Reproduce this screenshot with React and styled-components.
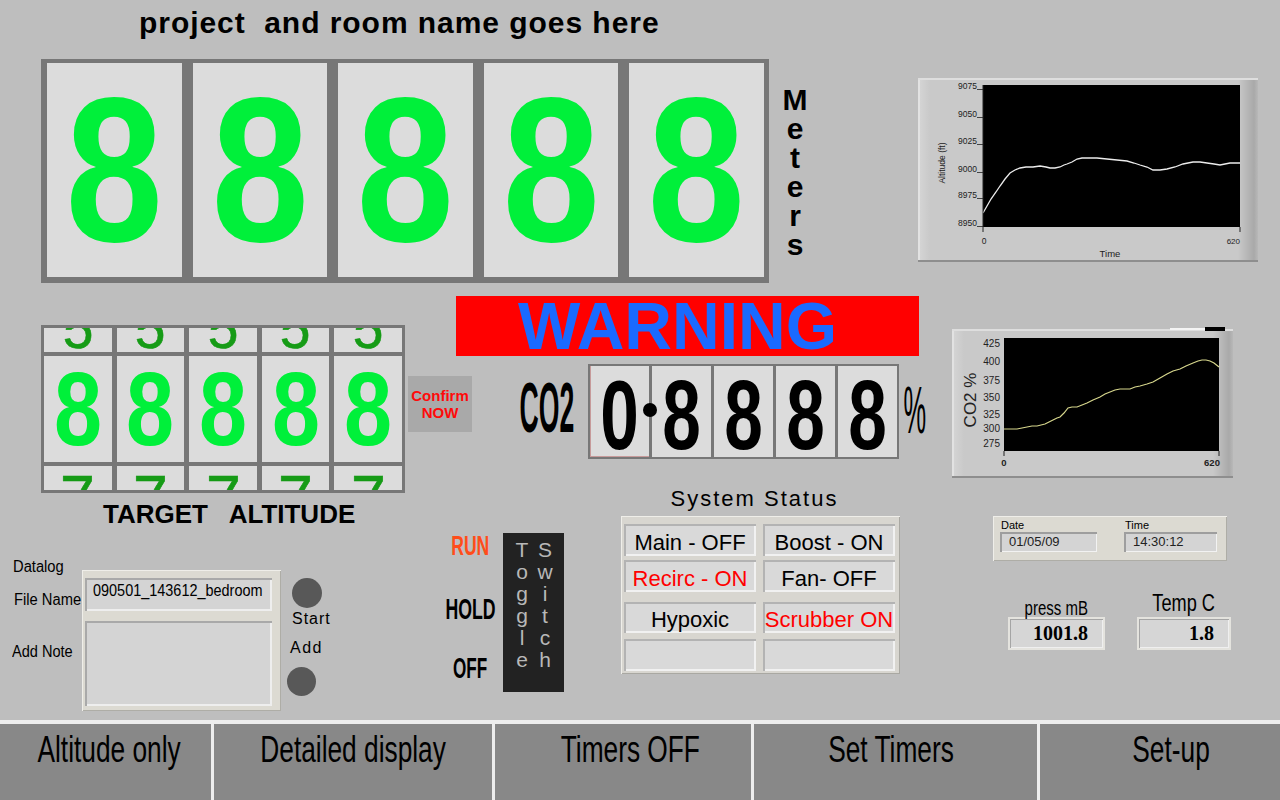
import React from 'react';
import styled, { createGlobalStyle } from 'styled-components';

const GlobalStyle = createGlobalStyle`
  html, body {
    margin: 0;
    padding: 0;
    background: #bebebe;
  }
  body {
    font-family: 'Liberation Sans', Arial, sans-serif;
    color: #000;
  }
`;

const Screen = styled.div`
  width: 1280px;
  height: 800px;
  overflow: hidden;
  background: #bebebe;
  display: flex;
  flex-direction: column;
`;

const Main = styled.div`
  height: 720px;
  display: flex;
  flex-direction: column;
`;

const Row = styled.div`
  display: flex;
  align-items: flex-start;
  height: ${(p) => (p.$h ? `${p.$h}px` : 'auto')};
  margin-top: ${(p) => p.$mt || 0}px;
  margin-left: ${(p) => p.$ml || 0}px;
`;

const Stack = styled.div`
  display: flex;
  flex-direction: column;
  margin-left: ${(p) => p.$ml || 0}px;
  margin-top: ${(p) => p.$mt || 0}px;
  align-items: ${(p) => p.$align || 'stretch'};
  width: ${(p) => (p.$w ? `${p.$w}px` : 'auto')};
`;

const Narrow = styled.span`
  display: inline-block;
  white-space: pre;
  transform: scaleX(${(p) => p.$sx || 1});
  transform-origin: ${(p) => p.$origin || 'center'} center;
`;

/* ---------- top: title + big altitude digits ---------- */

const Title = styled.h1`
  margin: 0;
  height: 59px;
  box-sizing: border-box;
  padding: 6px 0 0 98px;
  font-size: 30px;
  line-height: 34px;
  font-weight: bold;
  letter-spacing: 0.95px;
  white-space: pre;
`;

const BigFrame = styled.div`
  width: 728px;
  height: 224px;
  box-sizing: border-box;
  padding: 4px 5px 6px 6px;
  background: #777;
  display: flex;
  gap: 11px;
`;

const BigCell = styled.div`
  flex: 1;
  background: #dcdcdc;
  display: flex;
  align-items: center;
  justify-content: center;
`;

const BigDigit = styled.span`
  font-size: 206px;
  line-height: 1;
  font-weight: bold;
  color: #00f03a;
  transform: scaleX(0.85);
`;

const Meters = styled.div`
  width: 24px;
  margin: 85px 0 0 14px;
  display: flex;
  flex-direction: column;
  align-items: center;
  font-size: 30px;
  line-height: 29px;
  font-weight: bold;
`;

/* ---------- charts ---------- */

const ChartPanel = styled.div`
  width: ${(p) => p.$w}px;
  height: ${(p) => p.$h}px;
  margin-left: ${(p) => p.$ml}px;
  margin-top: ${(p) => p.$mt}px;
  background: linear-gradient(
    to right,
    #d6d6d6 0,
    #c9c9c9 12px,
    #c9c9c9 calc(100% - 20px),
    #a9a9a9 calc(100% - 4px),
    #b8b8b8 100%
  );
  box-shadow: inset 0 2px 0 #dedede, inset 0 -2px 0 #8e8e8e, inset 2px 0 0 #e2e2e2;

  svg {
    display: block;
    overflow: visible;
  }
  text {
    font-family: 'Liberation Sans', Arial, sans-serif;
    fill: #222;
  }
`;

const altPts =
  '65,135 69,128 73,121 78,114 82,108 87,101 92,95 97,92 102,90 108,89 115,89 122,88 128,89 132,90 137,90 142,89 146,87 149,86 154,84 159,81 164,80 169,80 179,80 189,81 199,82 209,83 216,85 222,87 229,89 235,92 242,92 249,91 257,89 265,86 270,85 275,84 282,84 289,85 296,86 302,87 307,86 312,85 322,85';

const AltitudeChart = () => {
  const ticks = [
    ['9075', 8],
    ['9050', 36],
    ['9025', 63],
    ['9000', 91],
    ['8975', 117],
    ['8950', 145],
  ];
  return (
    <ChartPanel $w={340} $h={184} $ml={111} $mt={78}>
      <svg width="340" height="184" viewBox="0 0 340 184">
        <rect x="65" y="7" width="257" height="142" fill="#000" />
        <polyline points={altPts} fill="none" stroke="#ececec" strokeWidth="1.3" />
        <line x1="65" y1="7" x2="65" y2="154" stroke="#222" strokeWidth="1" />
        <line x1="322" y1="149" x2="322" y2="154" stroke="#222" strokeWidth="1" />
        {ticks.map(([label, y]) => (
          <g key={label}>
            <text x="59" y={y + 3} fontSize="8.5" textAnchor="end">
              {label}
            </text>
            <line x1="59" y1={y + 3.5} x2="65" y2={y + 3.5} stroke="#222" strokeWidth="0.8" />
          </g>
        ))}
        <text x="27" y="85" fontSize="8.5" textAnchor="middle" transform="rotate(-90 27 85)">
          Altitude (ft)
        </text>
        <text x="66" y="166" fontSize="8.5" textAnchor="middle">
          0
        </text>
        <text x="322" y="166" fontSize="8" textAnchor="end">
          620
        </text>
        <text x="192" y="179" fontSize="9.5" textAnchor="middle">
          Time
        </text>
      </svg>
    </ChartPanel>
  );
};

const co2Pts =
  '52,100 58,100 65,100 70,99 75,98 80,97 85,97 89,96 93,95 97,93 101,91 105,89 108,88 112,84 116,79 120,78 125,78 130,76 135,74 141,71 148,68 153,65 158,63 163,61 168,60 173,60 178,60 183,58 188,57 195,55 201,53 208,49 215,45 221,42 228,40 234,37 241,34 246,32 250,31 254,31 258,32 262,34 267,38';

const Co2Chart = () => {
  const ticks = [
    ['425', 14],
    ['400', 32],
    ['375', 51],
    ['350', 68],
    ['325', 85],
    ['300', 99],
    ['275', 114],
  ];
  return (
    <ChartPanel $w={281} $h={149} $ml={26} $mt={39}>
      <svg width="281" height="149" viewBox="0 0 281 149">
        <line x1="218" y1="0" x2="253" y2="0" stroke="#f4f4f4" strokeWidth="2" />
        <rect x="253" y="-2" width="20" height="4" fill="#000" />
        <rect x="52" y="9" width="215" height="113" fill="#000" />
        <polyline points={co2Pts} fill="none" stroke="#d6d68c" strokeWidth="1.2" />
        <line x1="52" y1="122" x2="52" y2="127" stroke="#222" strokeWidth="1" />
        <line x1="267" y1="122" x2="267" y2="127" stroke="#222" strokeWidth="1" />
        {ticks.map(([label, y]) => (
          <text key={label} x="48" y={y + 3.5} fontSize="10" textAnchor="end">
            {label}
          </text>
        ))}
        <text x="24" y="71" fontSize="17" textAnchor="middle" transform="rotate(-90 24 71)">
          CO2  %
        </text>
        <text x="52" y="137" fontSize="9.5" fontWeight="bold" textAnchor="middle">
          0
        </text>
        <text x="260" y="137" fontSize="9.5" fontWeight="bold" textAnchor="middle">
          620
        </text>
      </svg>
    </ChartPanel>
  );
};

/* ---------- target altitude spinner ---------- */

const SpinFrame = styled.div`
  width: 364px;
  height: 168px;
  box-sizing: border-box;
  padding: 3px;
  background: #777;
  display: grid;
  grid-template-columns: repeat(5, 1fr);
  grid-template-rows: 24px 106px 24px;
  gap: 4px 5px;
`;

const SpinCell = styled.div`
  background: #dcdcdc;
  overflow: hidden;
  display: flex;
  justify-content: center;
  align-items: ${(p) =>
    p.$pos === 'top' ? 'flex-end' : p.$pos === 'bottom' ? 'flex-start' : 'center'};
`;

const spinSize = { top: 58, mid: 104, bottom: 66 };

const SpinDigit = styled.span`
  line-height: 1;
  font-size: ${(p) => spinSize[p.$pos]}px;
  font-weight: ${(p) => (p.$pos === 'mid' ? 'bold' : 'normal')};
  color: ${(p) => (p.$pos === 'mid' ? '#00f03a' : '#169b16')};
  transform: scaleX(${(p) => (p.$pos === 'mid' ? 0.83 : 0.95)});
  margin-bottom: ${(p) => (p.$pos === 'top' ? -5 : 0)}px;
  -webkit-text-stroke: ${(p) => (p.$pos === 'mid' ? 0 : 0.6)}px #169b16;
`;

const TargetLabel = styled.div`
  margin: 6px 0 0 62px;
  font-size: 26px;
  line-height: 30px;
  font-weight: bold;
  white-space: pre;
`;

const ConfirmButton = styled.button`
  width: 64px;
  height: 56px;
  margin: 51px 0 0 3px;
  padding: 0;
  border: none;
  background: #a9a9a9;
  color: #ff0a0a;
  font-family: 'Liberation Sans', Arial, sans-serif;
  font-size: 15px;
  line-height: 17px;
  font-weight: bold;
`;

/* ---------- warning + CO2 readout ---------- */

const Warning = styled.div`
  width: 463px;
  height: 60px;
  box-sizing: border-box;
  padding-right: 20px;
  background: #ff0000;
  color: #1a6aff;
  font-size: 66px;
  line-height: 60px;
  font-weight: bold;
  text-align: center;
`;

const Co2Row = styled.div`
  display: flex;
  align-items: center;
  margin-top: 8px;
  padding-left: 64px;
`;

const Co2Label = styled.div`
  width: 53px;
  margin: 0 15px 8px 0;
  display: flex;
  justify-content: center;
  font-size: 70px;
  line-height: 70px;
  font-weight: bold;
`;

const PercentLabel = styled.div`
  width: 23px;
  margin: 0 0 4px 4px;
  display: flex;
  justify-content: center;
  font-size: 67px;
  line-height: 67px;
`;

const Co2Frame = styled.div`
  position: relative;
  width: 311px;
  height: 95px;
  box-sizing: border-box;
  padding: 2px;
  background: #777;
  display: grid;
  grid-template-columns: repeat(5, 1fr);
  grid-template-rows: 91px;
  gap: 3px;
`;

const Co2Cell = styled.div`
  background: #dcdcdc;
  display: flex;
  align-items: center;
  justify-content: center;
  padding-top: 6px;
  box-sizing: border-box;
  box-shadow: ${(p) => (p.$first ? 'inset 1px 0 0 #c79a9a, inset 0 -1px 0 #c79a9a' : 'none')};
`;

const Co2Digit = styled.span`
  font-size: 99px;
  line-height: 80px;
  font-weight: bold;
  transform: scaleX(0.7);
`;

const DecimalDot = styled.span`
  position: absolute;
  left: 55px;
  top: 39px;
  width: 14px;
  height: 14px;
  border-radius: 50%;
  background: #000;
`;

/* ---------- datalog ---------- */

const SmallLabel = styled.div`
  font-size: 16px;
  line-height: 18px;
  margin-top: ${(p) => p.$mt || 0}px;
  margin-left: ${(p) => p.$ml || 0}px;
  letter-spacing: ${(p) => p.$ls || 0}px;
  white-space: nowrap;
`;

const BeigePanel = styled.div`
  box-sizing: border-box;
  width: ${(p) => p.$w}px;
  height: ${(p) => p.$h}px;
  margin-top: ${(p) => p.$mt || 0}px;
  background: #dcdad2;
  box-shadow: inset 1px 1px 0 #efeee9, inset -1px -1px 0 #aeada6;
`;

const LogPanel = styled(BeigePanel)`
  padding: 8px 9px 5px 3px;
  display: flex;
  flex-direction: column;
  gap: 10px;
`;

const InsetField = styled.div`
  box-sizing: border-box;
  height: ${(p) => p.$h}px;
  width: ${(p) => (p.$w ? `${p.$w}px` : 'auto')};
  background: #d4d4d4;
  box-shadow: inset 2px 2px 0 #a9a9a9, inset -2px -2px 0 #eeeeee;
  white-space: nowrap;
`;

const FileNameField = styled(InsetField)`
  padding: 3px 0 0 8px;
  font-size: 17px;
  line-height: 20px;
`;

const RoundButton = styled.div`
  width: ${(p) => p.$d}px;
  height: ${(p) => p.$d}px;
  border-radius: 50%;
  background: #585858;
  margin-top: ${(p) => p.$mt || 0}px;
  margin-left: ${(p) => p.$ml || 0}px;
`;

/* ---------- toggle switch ---------- */

const ModeLabel = styled.div`
  font-size: ${(p) => p.$fs}px;
  line-height: ${(p) => p.$lh}px;
  font-weight: bold;
  color: ${(p) => p.$color || '#000'};
  margin-top: ${(p) => p.$mt}px;
`;

const ToggleBox = styled.div`
  width: 61px;
  height: 159px;
  box-sizing: border-box;
  margin: 49px 0 0 8px;
  padding: 6px 0 0 9px;
  background: #222;
  display: flex;
  gap: 3px;
`;

const ToggleColumn = styled.div`
  width: 20px;
  display: flex;
  flex-direction: column;
  align-items: center;
  font-size: 21px;
  line-height: 22px;
  color: #b8b8b8;
`;

/* ---------- system status ---------- */

const StatusTitle = styled.div`
  margin-top: 2px;
  padding-right: 12px;
  font-size: 22px;
  line-height: 26px;
  letter-spacing: 2px;
  text-align: center;
`;

const StatusPanel = styled.div`
  width: 279px;
  height: 158px;
  box-sizing: border-box;
  margin-top: 4px;
  padding: 8px 5px 3px 3px;
  background: #d8d6d0;
  box-shadow: inset 1px 1px 0 #efeee9, inset -1px -1px 0 #a9a8a2;
  display: flex;
  flex-direction: column;
  gap: 10px;
`;

const StatusHalf = styled.div`
  display: grid;
  grid-template-columns: 1fr 1fr;
  grid-template-rows: ${(p) => p.$rows};
  column-gap: 7px;
  row-gap: ${(p) => p.$gap}px;
`;

const StatusCell = styled.div`
  background: #d9d9d9;
  box-shadow: inset 2px 2px 0 #b3b3b3, inset -2px -2px 0 #f1f1f1;
  display: flex;
  align-items: center;
  justify-content: center;
  padding-top: 5px;
  box-sizing: border-box;
  font-size: 22px;
  line-height: 24px;
  white-space: nowrap;
  color: ${(p) => (p.$on ? '#ff0000' : '#000')};
`;

/* ---------- date, time, pressure, temperature ---------- */

const DateTimePanel = styled(BeigePanel)`
  padding: 3px 0 0 7px;
  display: flex;
  gap: 27px;
`;

const TinyLabel = styled.div`
  font-size: 11px;
  line-height: 12px;
  padding-left: 1px;
  margin-bottom: 1px;
`;

const ClockField = styled(InsetField)`
  padding-left: 9px;
  font-size: 13px;
  line-height: 20px;
  color: #222;
  box-shadow: inset 2px 2px 0 #9e9e9e, inset -1px -1px 0 #f2f2f2;
`;

const ReadingRow = styled.div`
  display: flex;
  align-items: flex-end;
  margin: 30px 0 0 15px;
  gap: 32px;
`;

const ReadingLabel = styled.div`
  display: flex;
  justify-content: center;
  font-size: ${(p) => p.$fs}px;
  line-height: 24px;
  margin-bottom: ${(p) => p.$mb}px;
`;

const ReadingField = styled(InsetField)`
  padding-right: 17px;
  text-align: right;
  font-family: 'Liberation Serif', 'Times New Roman', serif;
  font-weight: bold;
  font-size: 20px;
  line-height: 32px;
  background: #d6d6d6;
  box-shadow: inset 0 0 0 2px #e4e3de, inset 3px 3px 0 #a5a5a5, inset -3px -3px 0 #efefef;
`;

/* ---------- bottom navigation ---------- */

const NavBar = styled.nav`
  height: 80px;
  box-sizing: border-box;
  border-top: 4px solid #ededed;
  background: #ededed;
  display: grid;
  grid-template-columns: 211px 278px 256px 283px 1fr;
  column-gap: 3px;
`;

const NavButton = styled.button`
  border: none;
  margin: 0;
  background: #888;
  color: #000;
  display: flex;
  justify-content: center;
  align-items: flex-start;
  padding-top: 6px;
  padding-left: ${(p) => Math.max(p.$dx, 0)}px;
  padding-right: ${(p) => Math.max(-p.$dx, 0)}px;
  font-family: 'Liberation Sans', Arial, sans-serif;
  font-size: 36px;
  line-height: 40px;
`;

const navItems = [
  ['Altitude only', 7],
  ['Detailed display', 0],
  ['Timers OFF', 14],
  ['Set Timers', -8],
  ['Set-up', 22],
];

const statusTop = [
  ['Main - OFF', false],
  ['Boost - ON', false],
  ['Recirc - ON', true],
  ['Fan- OFF', false],
];

const statusBottom = [
  ['Hypoxic', false],
  ['Scrubber ON', true],
  ['', false],
  ['', false],
];

const App = () => (
  <>
    <GlobalStyle />
    <Screen>
      <Main>
        <Row $h={290}>
          <Stack $ml={41}>
            <Title>project  and room name goes here</Title>
            <BigFrame>
              {[0, 1, 2, 3, 4].map((i) => (
                <BigCell key={i}>
                  <BigDigit>8</BigDigit>
                </BigCell>
              ))}
            </BigFrame>
          </Stack>
          <Meters>
            {'Meters'.split('').map((ch, i) => (
              <span key={i}>{ch}</span>
            ))}
          </Meters>
          <AltitudeChart />
        </Row>

        <Row>
          <Row $mt={35} $ml={41}>
            <Stack>
              <SpinFrame>
                {[0, 1, 2, 3, 4].map((i) => (
                  <SpinCell key={`t${i}`} $pos="top">
                    <SpinDigit $pos="top">5</SpinDigit>
                  </SpinCell>
                ))}
                {[0, 1, 2, 3, 4].map((i) => (
                  <SpinCell key={`m${i}`} $pos="mid">
                    <SpinDigit $pos="mid">8</SpinDigit>
                  </SpinCell>
                ))}
                {[0, 1, 2, 3, 4].map((i) => (
                  <SpinCell key={`b${i}`} $pos="bottom">
                    <SpinDigit $pos="bottom">7</SpinDigit>
                  </SpinCell>
                ))}
              </SpinFrame>
              <TargetLabel>TARGET   ALTITUDE</TargetLabel>
            </Stack>
            <ConfirmButton>
              Confirm
              <br />
              NOW
            </ConfirmButton>
          </Row>

          <Stack $ml={-16} $mt={6}>
            <Warning>WARNING</Warning>
            <Co2Row>
              <Co2Label>
                <Narrow $sx={0.38}>CO2</Narrow>
              </Co2Label>
              <Co2Frame>
                {['0', '8', '8', '8', '8'].map((d, i) => (
                  <Co2Cell key={i} $first={i === 0}>
                    <Co2Digit>{d}</Co2Digit>
                  </Co2Cell>
                ))}
                <DecimalDot />
              </Co2Frame>
              <PercentLabel>
                <Narrow $sx={0.38}>%</Narrow>
              </PercentLabel>
            </Co2Row>
          </Stack>

          <Co2Chart />
        </Row>

        <Row $mt={-45}>
          <Stack $ml={12} $mt={74} $w={70}>
            <SmallLabel $ml={1}>
              <Narrow $sx={0.92} $origin="left">Datalog</Narrow>
            </SmallLabel>
            <SmallLabel $mt={15} $ml={2}>
              <Narrow $sx={0.92} $origin="left">File Name</Narrow>
            </SmallLabel>
            <SmallLabel $mt={34}>
              <Narrow $sx={0.91} $origin="left">Add Note</Narrow>
            </SmallLabel>
          </Stack>
          <LogPanel $w={199} $h={141} $mt={86}>
            <FileNameField $h={33}>
              <Narrow $sx={0.85} $origin="left">090501_143612_bedroom</Narrow>
            </FileNameField>
            <InsetField $h={85} />
          </LogPanel>
          <Stack $ml={6} $w={44}>
            <RoundButton $d={30} $mt={94} $ml={5} />
            <SmallLabel $mt={2} $ml={5} $ls={1}>
              Start
            </SmallLabel>
            <SmallLabel $mt={11} $ml={3} $ls={1.5}>
              Add
            </SmallLabel>
            <RoundButton $d={29} $mt={10} />
          </Stack>

          <Stack $ml={114} $w={50} $align="center">
            <ModeLabel $fs={27} $lh={30} $mt={47} $color="#ff4d1a">
              <Narrow $sx={0.65}>RUN</Narrow>
            </ModeLabel>
            <ModeLabel $fs={30} $lh={32} $mt={32}>
              <Narrow $sx={0.59}>HOLD</Narrow>
            </ModeLabel>
            <ModeLabel $fs={29} $lh={32} $mt={27}>
              <Narrow $sx={0.59}>OFF</Narrow>
            </ModeLabel>
          </Stack>
          <ToggleBox>
            <ToggleColumn>
              {'Toggle'.split('').map((ch, i) => (
                <span key={i}>{ch}</span>
              ))}
            </ToggleColumn>
            <ToggleColumn>
              {'Switch'.split('').map((ch, i) => (
                <span key={i}>{ch}</span>
              ))}
            </ToggleColumn>
          </ToggleBox>

          <Stack $ml={57} $w={279}>
            <StatusTitle>System Status</StatusTitle>
            <StatusPanel>
              <StatusHalf $rows="32px 32px" $gap={4}>
                {statusTop.map(([text, on]) => (
                  <StatusCell key={text} $on={on}>
                    {text}
                  </StatusCell>
                ))}
              </StatusHalf>
              <StatusHalf $rows="31px 32px" $gap={6}>
                {statusBottom.map(([text, on], i) => (
                  <StatusCell key={i} $on={on}>
                    {text}
                  </StatusCell>
                ))}
              </StatusHalf>
            </StatusPanel>
          </Stack>

          <Stack $ml={93} $mt={32}>
            <DateTimePanel $w={234} $h={45}>
              <Stack>
                <TinyLabel>Date</TinyLabel>
                <ClockField $h={20} $w={97}>
                  01/05/09
                </ClockField>
              </Stack>
              <Stack>
                <TinyLabel>Time</TinyLabel>
                <ClockField $h={20} $w={93}>
                  14:30:12
                </ClockField>
              </Stack>
            </DateTimePanel>
            <ReadingRow>
              <Stack $w={97}>
                <ReadingLabel $fs={20} $mb={-3}>
                  <Narrow $sx={0.75}>press mB</Narrow>
                </ReadingLabel>
                <ReadingField $h={33}>1001.8</ReadingField>
              </Stack>
              <Stack $w={94}>
                <ReadingLabel $fs={23} $mb={2}>
                  <Narrow $sx={0.79}>Temp C</Narrow>
                </ReadingLabel>
                <ReadingField $h={33}>1.8</ReadingField>
              </Stack>
            </ReadingRow>
          </Stack>
        </Row>
      </Main>

      <NavBar>
        {navItems.map(([label, dx]) => (
          <NavButton key={label} $dx={dx}>
            <Narrow $sx={0.73}>{label}</Narrow>
          </NavButton>
        ))}
      </NavBar>
    </Screen>
  </>
);

export default App;
